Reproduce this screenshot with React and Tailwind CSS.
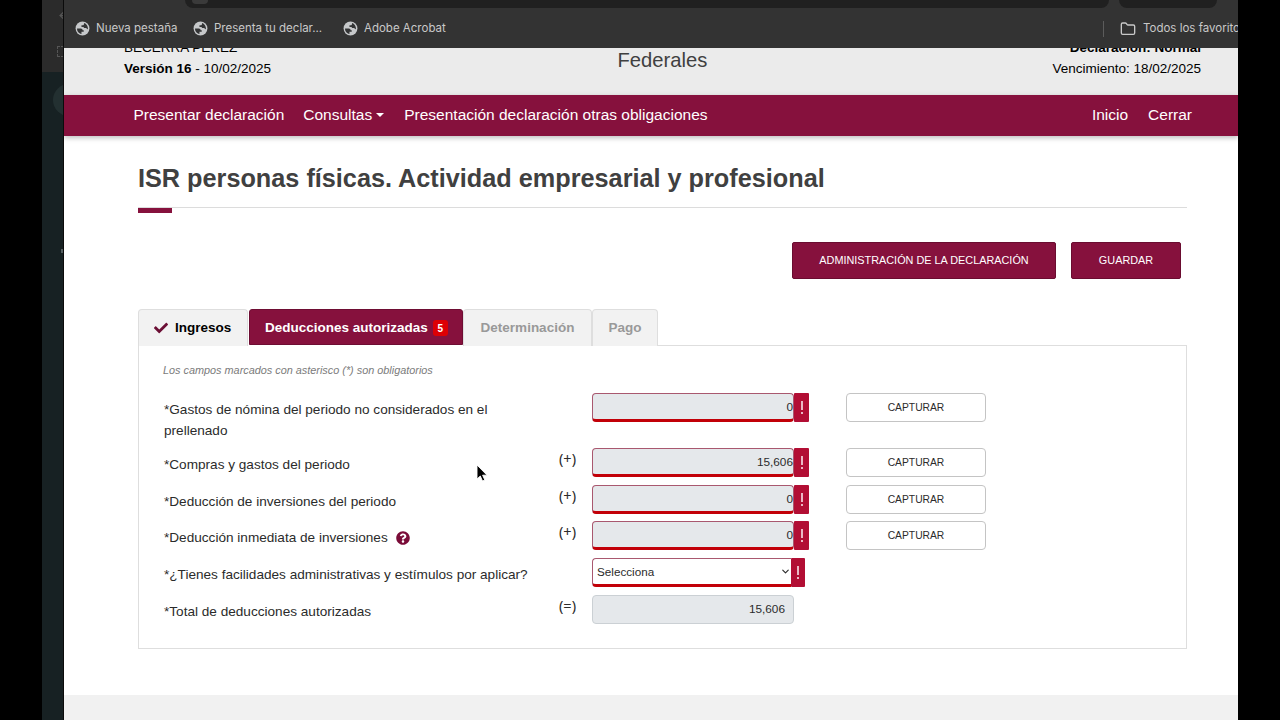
import { FaCheck, FaQuestionCircle } from 'react-icons/fa'
import { ArrowLeft, ChevronDown, Folder } from 'lucide-react'

const bookmarks = [
  { label: 'Nueva pestaña', width: 'w-[118px]' },
  { label: 'Presenta tu declar...', width: 'w-[150px]' },
  { label: 'Adobe Acrobat', width: 'w-[120px]' },
]

const rows = [
  { label: '*Gastos de nómina del periodo no considerados en el prellenado', value: '0', height: 'h-[54.6px]' },
  { label: '*Compras y gastos del periodo', op: '(+)', value: '15,606', height: 'h-[36.75px]' },
  { label: '*Deducción de inversiones del periodo', op: '(+)', value: '0', height: 'h-[36.75px]' },
  { label: '*Deducción inmediata de inversiones', op: '(+)', value: '0', help: true, height: 'h-[36.75px]' },
]

function Globe() {
  return (
    <svg viewBox="0 0 16 16" className="h-[15px] w-[15px] shrink-0">
      <circle cx="8" cy="8" r="7.4" fill="#c6c8ca" />
      <path
        d="M2.2 8.1h3.9c1.3 0 2 .8 2 1.8h1.2v1.5H6.9v2.5C4 13.5 2 11 2.2 8.1ZM9.6 2.2v1c0 .8-.7 1.4-1.5 1.4H6.9v1.700h1.400c.8 0 1.400.5 1.400 1.200h1.600c.8 0 1.300.5 1.500 1.100l1 .2C14 5.600 12.300 3 9.600 2.200Z"
        fill="#333435"
      />
    </svg>
  )
}

function BrowserBar() {
  return (
    <div className="flex h-12 shrink-0 flex-col bg-[#333333] font-[Inter,sans-serif] text-[11.5px] text-[#c9c9c9]">
      <div className="flex h-2 shrink-0 gap-[10px] pl-[121px]">
        <div className="flex h-2 w-[924px] overflow-hidden rounded-b-[10px] bg-[#202020] pl-[7px]">
          <div className="h-1 w-4 rounded-b-full bg-[#3a3a3a]" />
        </div>
        <div className="h-2 w-[98px] rounded-b-[10px] bg-[#202020]" />
      </div>
      <div className="flex h-10 items-center overflow-hidden pl-[11px] whitespace-nowrap">
        {bookmarks.map((b) => (
          <div key={b.label} className={`flex shrink-0 items-center gap-[6px] pt-px ${b.width}`}>
            <Globe />
            <span>{b.label}</span>
          </div>
        ))}
        <div className="ml-auto flex w-[135px] shrink-0 items-center pt-px">
          <div className="h-4 w-px shrink-0 bg-[#5c5c5c]" />
          <Folder className="ml-4 h-4 w-4 shrink-0" strokeWidth={2} />
          <span className="ml-[7px]">Todos los favoritos</span>
        </div>
      </div>
    </div>
  )
}

function ErrorMark({ className }) {
  return (
    <div className={`flex h-[29px] flex-col items-center gap-[2px] rounded-[1px] bg-[#b20e34] pt-[8px] ${className}`}>
      <span className="h-[9px] w-[2px] bg-[#eab9c5]" />
      <span className="h-[2px] w-[2px] bg-[#eab9c5]" />
    </div>
  )
}

function Operator({ children }) {
  return <span className="w-[33px] font-['Noto_Sans',sans-serif] text-[14.5px] leading-[20px]">{children}</span>
}

function Row({ row }) {
  return (
    <div className={`flex items-start ${row.height}`}>
      <div className="flex w-[395px] pt-[7px] leading-[20.5px]">
        <span className="max-w-[340px]">{row.label}</span>
        {row.help && <FaQuestionCircle className="mt-[3px] ml-2 h-[14px] w-[14px] text-[#7a0c38]" />}
      </div>
      <Operator>{row.op}</Operator>
      <div className="h-[29px] w-[202px] rounded-[4px] border border-b-[3px] border-[#a9586f] border-b-[#c20008] bg-[#e5e8eb] text-right text-[11.8px] leading-[26px]">
        {row.value}
      </div>
      <ErrorMark className="w-[15px]" />
      <button className="ml-[37px] h-[29px] w-[140px] rounded-[4px] border border-[#c4c4c4] bg-white text-[10.3px]">
        CAPTURAR
      </button>
    </div>
  )
}

export default function App() {
  return (
    <div className="relative flex h-[720px] w-[1280px] overflow-hidden bg-black font-['Liberation_Sans',Arial,sans-serif] text-[13.6px] text-[#2b2b2b]">
      {/* window behind */}
      <div className="ml-[42px] flex w-[22px] shrink-0 flex-col overflow-hidden border-r border-[#0b0b0b] bg-[#172123]">
        <div className="flex h-[72px] shrink-0 flex-col bg-[#2b2b2b] pl-[15px] text-[#555]">
          <ArrowLeft className="mt-2 h-[15px] w-[15px] shrink-0" strokeWidth={2} />
          <div className="mt-[23px] h-[11px] w-[11px] shrink-0 border border-dashed border-[#555]" />
        </div>
        <div className="mt-3 ml-[11px] h-8 w-8 shrink-0 rounded-full bg-[#233031]" />
        <div className="mt-[133px] ml-[19px] h-1 w-1 shrink-0 bg-[#566062]" />
      </div>

      <div className="flex w-[1174px] shrink-0 flex-col overflow-hidden bg-white">
        <BrowserBar />

        <header className="flex h-[47px] shrink-0 justify-between overflow-hidden bg-[#ebebeb] pr-[37px] pl-[60px] text-[13.5px] leading-[20.5px] text-black">
          <div className="-mt-[10px] w-[300px]">
            <p>BECERRA PÉREZ</p>
            <p>
              <b>Versión 16</b> - 10/02/2025
            </p>
          </div>
          <p className="w-[90px] text-[20.2px] leading-6 text-[#404040]">Federales</p>
          <div className="-mt-[10px] w-[300px] text-right">
            <p className="font-bold">Declaración: Normal</p>
            <p>Vencimiento: 18/02/2025</p>
          </div>
        </header>

        <nav className="z-10 flex h-[41px] shrink-0 items-center bg-[#86113d] pr-[46px] pb-px pl-[69.5px] text-[15.5px] text-white shadow-[0_2px_5px_rgba(0,0,0,0.25)]">
          <span>Presentar declaración</span>
          <span className="ml-[19px]">Consultas</span>
          <span className="ml-1 border-x-4 border-t-4 border-x-transparent border-t-white" />
          <span className="ml-5">Presentación declaración otras obligaciones</span>
          <span className="ml-auto">Inicio</span>
          <span className="ml-5">Cerrar</span>
        </nav>

        <main className="h-[559px] shrink-0 pr-[51px] pl-[74px]">
          <h1 className="h-[71px] pt-[27px] text-[25.25px] leading-[30px] font-bold text-[#404040]">
            ISR personas físicas. Actividad empresarial y profesional
          </h1>
          <div className="h-[35px] border-t border-[#dcdcdc]">
            <div className="h-[5px] w-[34px] bg-[#86113d]" />
          </div>

          <div className="flex justify-end gap-[15px] pr-[6px] text-[10.86px] text-white">
            <button className="h-[37px] w-[264px] rounded-[2px] border border-[#6a0c30] bg-[#86113d]">
              ADMINISTRACIÓN DE LA DECLARACIÓN
            </button>
            <button className="h-[37px] w-[110px] rounded-[2px] border border-[#6a0c30] bg-[#86113d]">GUARDAR</button>
          </div>

          <div className="mt-[30px] flex h-[37px] text-[13.5px] font-bold">
            <div className="flex w-[110px] items-center rounded-t-[4px] border border-b-0 border-[#dedede] bg-[#f2f2f2] pl-[15px] text-black">
              <FaCheck className="mr-[7px] h-[14px] w-[14px] text-[#6b0f35]" />
              Ingresos
            </div>
            <div className="ml-px flex h-[36px] w-[214px] items-center rounded-t-[3px] border border-[#6e0d33] bg-[#86113d] pt-[2px] pl-[15px] text-white">
              Deducciones autorizadas
              <span className="ml-[5px] flex h-4 w-[15px] items-center justify-center rounded-[3px] bg-[#dd0005] text-[10px]">
                5
              </span>
            </div>
            <div className="flex w-[129px] items-center justify-center rounded-t-[4px] border border-b-0 border-[#dedede] bg-[#f2f2f2] text-[#999]">
              Determinación
            </div>
            <div className="flex w-[66px] items-center justify-center rounded-t-[4px] border border-b-0 border-[#dedede] bg-[#f2f2f2] text-[#999]">
              Pago
            </div>
            <div className="flex-1 border-b border-[#dedede]" />
          </div>

          <section className="h-[303px] border border-t-0 border-[#dedede] pt-[15px] pl-[25px]">
            <p className="-ml-px h-[32.4px] text-[10.87px] leading-[18px] text-[#7b7b7b] italic">
              Los campos marcados con asterisco (*) son obligatorios
            </p>
            {rows.map((row) => (
              <Row key={row.label} row={row} />
            ))}
            <div className="flex h-[36.75px] items-start">
              <span className="w-[428px] pt-[7px] leading-[20.5px]">
                *¿Tienes facilidades administrativas y estímulos por aplicar?
              </span>
              <div className="flex h-[29px] w-[199px] items-center justify-between rounded-l-[4px] border border-r-0 border-b-[3px] border-[#a9586f] border-b-[#c20008] bg-white pl-1 text-[11.7px]">
                Selecciona
                <ChevronDown className="h-[11px] w-[11px]" strokeWidth={2.5} />
              </div>
              <ErrorMark className="w-[14px]" />
            </div>
            <div className="flex items-start">
              <span className="w-[395px] pt-[7px] leading-[20.5px]">*Total de deducciones autorizadas</span>
              <Operator>(=)</Operator>
              <div className="h-[29px] w-[202px] rounded-[4px] border border-[#cbd0d4] bg-[#e5e8eb] pr-2 text-right text-[11.8px] leading-[27px]">
                15,606
              </div>
            </div>
          </section>
        </main>

        <footer className="h-[25px] shrink-0 bg-[#f1f1f1]" />
      </div>

      <svg viewBox="0 0 12 18" className="absolute top-[464px] left-[476px] h-[18px] w-[12px]">
        <path d="M1 1v14l3.300-3 2.200 5 2.300-1-2.200-4.800H11Z" fill="#000" stroke="#fff" strokeWidth=".9" />
      </svg>
    </div>
  )
}
